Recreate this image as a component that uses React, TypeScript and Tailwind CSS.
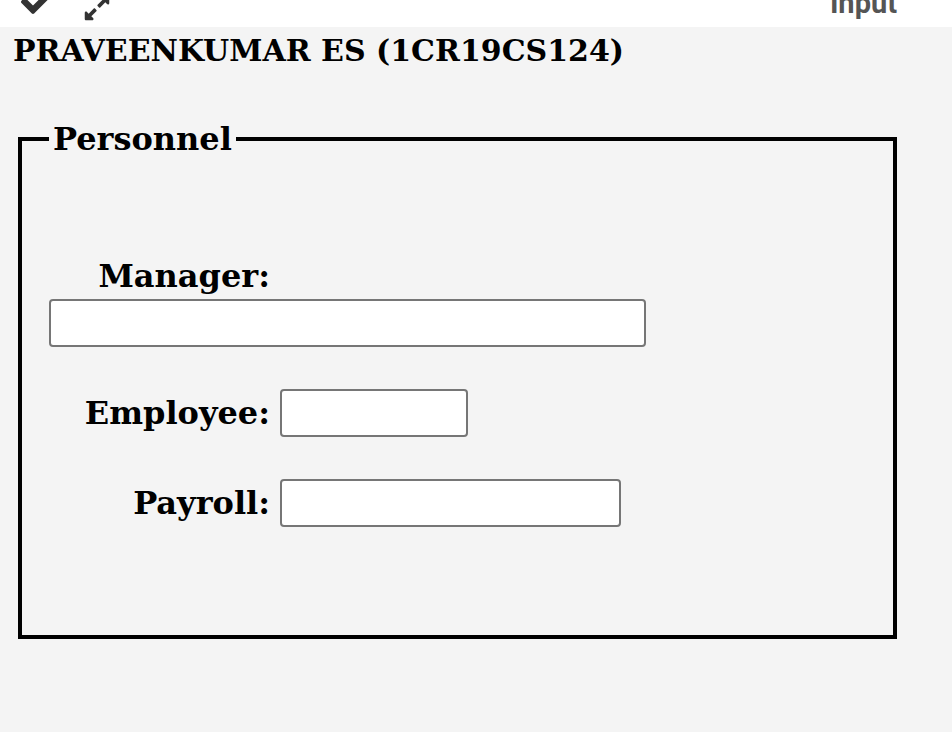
import { FaCheck, FaExpandAlt } from 'react-icons/fa';

const serif = "font-['DejaVu_Serif','Liberation_Serif',serif]";

const Row = ({ label, width }: { label: string; width: number }) => (
  <div className="flex items-center">
    <label className="w-[231px] pr-[10px] text-right text-[32px] font-bold leading-[1.2] text-black">
      {label}
    </label>
    <input
      type="text"
      style={{ width }}
      className="h-[48px] rounded-[4px] border-2 border-[#767676] bg-white px-2 outline-none"
    />
  </div>
);

export default function App() {
  return (
    <div className={`min-h-screen bg-[#f4f4f4] ${serif}`}>
      <div className="flex h-[27px] items-start overflow-hidden bg-white">
        <FaCheck size={32} className="-mt-[14px] ml-[21px] text-[#333]" />
        <FaExpandAlt size={28} className="-mt-[6px] ml-[30px] text-[#333]" />
        <span className="-mt-[11px] ml-auto mr-[55px] font-['Roboto',sans-serif] text-[29px] font-bold leading-none text-[#555]">
          Input
        </span>
      </div>

      <h1 className="px-[13px] pt-[6px] text-[30px] font-bold leading-[1.2] text-black">
        PRAVEENKUMAR ES (1CR19CS124)
      </h1>

      <fieldset className="mt-[51px] ml-[18px] w-[879px] border-4 border-black px-[27px] pb-[108px]">
        <legend className="px-1 text-[32px] font-bold leading-[1.2] text-black">Personnel</legend>

        <div className="mt-[99px] flex flex-col">
          <div className="w-[221px] text-right text-[32px] font-bold leading-[1.2] text-black">Manager:</div>
          <input
            type="text"
            className="mt-[3px] h-[48px] w-[597px] rounded-[4px] border-2 border-[#767676] bg-white px-2 outline-none"
          />
        </div>

        <div className="mt-[42px] flex flex-col gap-[42px]">
          <Row label="Employee:" width={188} />
          <Row label="Payroll:" width={341} />
        </div>
      </fieldset>
    </div>
  );
}
